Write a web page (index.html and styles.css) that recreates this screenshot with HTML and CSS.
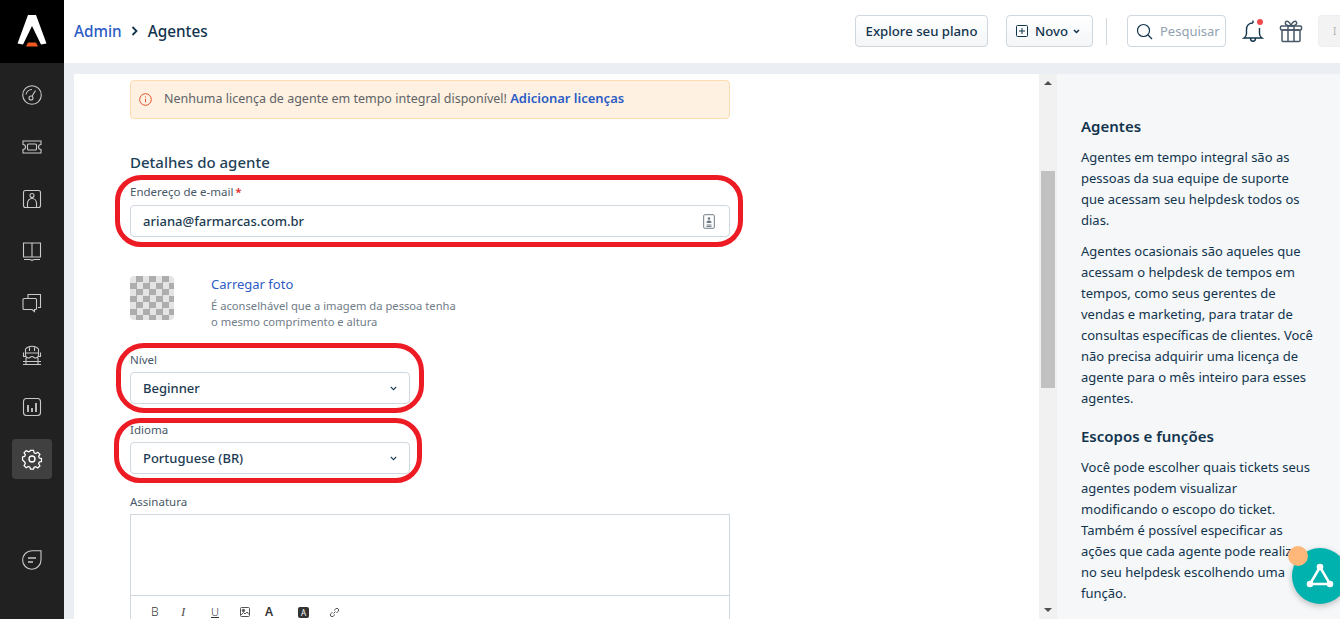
FILE: index.html
```html
<!DOCTYPE html>
<html lang="pt-BR">
<head>
  <meta charset="UTF-8">
  <title>Agentes</title>
  <link rel="stylesheet" href="styles.css">
</head>
<body>

  <aside class="sidebar">
    <div class="logo">
      <svg width="64" height="63" viewBox="0 0 64 63">
        <path fill="#fff" d="M28 15h8L46.500 43.500 41 44.500 32 26l-9 18.500-5.500-1z"/>
        <path fill="#f05a22" d="M28 42.500h8l2 4H26z"/>
      </svg>
    </div>
    <nav class="nav">
      <a class="nav-item">
        <svg class="nav-icon" viewBox="0 0 22 22"><circle cx="11" cy="11" r="9.300"/><circle cx="10" cy="14" r="2"/><path d="M11 12.300l3.500-5.800M5 10.500a6 6 0 0 1 6-5"/></svg>
      </a>
      <a class="nav-item">
        <svg class="nav-icon" viewBox="0 0 22 22"><path d="M2 5h18v3.500a2.500 2.500 0 0 0 0 5V17H2v-3.500a2.500 2.500 0 0 0 0-5z"/><rect x="6.500" y="8" width="9" height="6" rx="1"/></svg>
      </a>
      <a class="nav-item">
        <svg class="nav-icon" viewBox="0 0 22 22"><rect x="2.500" y="2.500" width="17" height="17" rx="2"/><circle cx="11" cy="7.500" r="2"/><path d="M6.500 19.500v-4c0-3 2-5 4.500-5s4.500 2 4.500 5v4"/></svg>
      </a>
      <a class="nav-item">
        <svg class="nav-icon" viewBox="0 0 22 22"><path d="M11 3v14M11 3H2.500v14H11M11 3h8.500v14H11M3 19.500h6l2 .8 2-.8h6"/></svg>
      </a>
      <a class="nav-item">
        <svg class="nav-icon" viewBox="0 0 22 22"><path d="M7 6V2.500h12.500v13H17"/><path d="M3 6.500h11.500a1 1 0 0 1 1 1v9a1 1 0 0 1-1 1h-1v2l-2.500-2H3a1 1 0 0 1-1-1v-9a1 1 0 0 1 1-1z"/></svg>
      </a>
      <a class="nav-item">
        <svg class="nav-icon" viewBox="0 0 22 22"><path d="M4.500 11V5c1.500-2 4-2.800 6.500-2.800S16 3 17.500 5v6M8.500 2.500V7M13.500 2.500V7M2.500 8.500v4h2M19.500 8.500v4h-2M4.500 9h13v2c0 2-1.500 3-3 3-1.500 0-2-1.500-3.500-1.500S9 14 7.500 14c-1.500 0-3-1-3-3M5 14v6M17 14v6M2 20.500h18M2 17.500h18"/></svg>
      </a>
      <a class="nav-item">
        <svg class="nav-icon" viewBox="0 0 22 22"><rect x="2.500" y="2.500" width="17" height="17" rx="3"/><path d="M7 9v7M11 12v4M15 7v9" stroke-width="1.800"/></svg>
      </a>
      <a class="nav-item active">
        <svg class="nav-icon" viewBox="0 0 22 22"><circle cx="11" cy="11" r="3"/><path d="M9.300 2h3.400l.6 2.600 1.800.8 2.300-1.400 2.400 2.400-1.400 2.300.7 1.800 2.400.6v3.300l-2.400.6-.7 1.800 1.400 2.300-2.400 2.400-2.300-1.400-1.800.7-.6 2.100H9.300l-.6-2.300-1.800-.7-2.300 1.400-2.400-2.400 1.400-2.300-.8-1.800L.5 12.700V9.300l2.300-.6.800-1.800-1.400-2.300L4.600 2.200 6.900 3.600l1.800-.8z" transform="translate(1.100 .6) scale(.9)"/></svg>
      </a>
      <a class="nav-item nav-bottom">
        <svg class="nav-icon" viewBox="0 0 22 22"><path d="M20 1.800V11a9.200 9.200 0 1 1-9.200-9.200z"/><path d="M7 9h8M7 13h5" stroke-width="1.400"/></svg>
      </a>
    </nav>
  </aside>

  <div class="page">
    <header class="topbar">
      <div class="breadcrumb">
        <a class="crumb-link">Admin</a>
        <svg class="crumb-sep" width="8" height="10" viewBox="0 0 8 10"><path d="M1.500 1l4 4-4 4"/></svg>
        <span class="crumb-current">Agentes</span>
      </div>
      <div class="top-actions">
        <button class="btn btn-plan">Explore seu plano</button>
        <button class="btn btn-new">
          <svg width="12" height="12" viewBox="0 0 12 12"><rect x=".5" y=".5" width="11" height="11" rx="1"/><path d="M6 3v6M3 6h6"/></svg>
          <span>Novo</span>
          <svg class="btn-caret" width="7" height="5" viewBox="0 0 7 5"><path d="M1 1l2.500 2.500L6 1"/></svg>
        </button>
        <span class="top-divider"></span>
        <div class="search">
          <svg width="17" height="17" viewBox="0 0 17 17"><circle cx="7.500" cy="7.500" r="6"/><path d="M12 12l4 4"/></svg>
          <span>Pesquisar</span>
        </div>
        <a class="bell">
          <svg width="22" height="24" viewBox="0 0 22 24"><path d="M11 4C7 4 4.500 6.500 4.500 10.500v4c0 2.500-1 3.500-2.500 4.500h18c-1.500-1-2.500-2-2.500-4.500V9M8.500 19.500c0 3.600 5 3.600 5 0M11 1.500V4"/></svg>
          <i class="bell-dot"></i>
        </a>
        <a class="gift">
          <svg width="24" height="24" viewBox="0 0 24 24"><rect x="3" y="11" width="18" height="11.500" rx="1"/><rect x="1.500" y="7" width="21" height="4" rx="1"/><path d="M9 7v15.500M15 7v15.500M12 7C8 7 5.500 5.500 6.500 3.200S11 2.500 12 7zM12 7c4 0 6.500-1.500 5.500-3.800S13 2.500 12 7z"/></svg>
        </a>
        <div class="avatar">I</div>
      </div>
    </header>

    <div class="workspace">
      <main class="main">
        <div class="form">
          <div class="notice">
            <svg width="13" height="13" viewBox="0 0 13 13"><circle cx="6.500" cy="6.500" r="5.800"/><path d="M6.500 5.800v3.500M6.500 3.400v1.100"/></svg>
            <p>Nenhuma licença de agente em tempo integral disponível! <a>Adicionar licenças</a></p>
          </div>

          <h2 class="section-title">Detalhes do agente</h2>

          <div class="field field-wide field-email">
            <span class="mark mark-email"></span>
            <label class="label">Endereço de e-mail<em>*</em></label>
            <div class="input">
              <span>ariana@farmarcas.com.br</span>
              <svg width="12" height="15" viewBox="0 0 12 15"><rect x=".7" y=".7" width="10.600" height="13.600" rx="1"/><circle class="fill" cx="6" cy="4.500" r="1.300"/><path class="fill" d="M3.500 9c0-2 1-2.500 2.500-2.500S8.500 7 8.500 9z"/><path d="M3.500 11h5M3.500 12.500h5"/></svg>
            </div>
          </div>

          <div class="photo">
            <div class="checker"></div>
            <div class="photo-text">
              <a>Carregar foto</a>
              <p>É aconselhável que a imagem da pessoa tenha<br>o mesmo comprimento e altura</p>
            </div>
          </div>

          <div class="field field-short field-level">
            <span class="mark mark-level"></span>
            <label class="label">Nível</label>
            <div class="input">
              <span>Beginner</span>
              <svg class="select-caret" width="7" height="5" viewBox="0 0 9 6"><path d="M1 1l3.500 3.500L8 1"/></svg>
            </div>
          </div>

          <div class="field field-short field-lang">
            <span class="mark mark-lang"></span>
            <label class="label">Idioma</label>
            <div class="input">
              <span>Portuguese (BR)</span>
              <svg class="select-caret" width="7" height="5" viewBox="0 0 9 6"><path d="M1 1l3.500 3.500L8 1"/></svg>
            </div>
          </div>

          <div class="field field-wide field-sign">
            <label class="label">Assinatura</label>
            <div class="editor">
              <div class="editor-area"></div>
              <div class="toolbar">
                <span class="tool tool-b">B</span>
                <span class="tool tool-i">I</span>
                <span class="tool tool-u">U</span>
                <svg class="tool-img" width="10" height="10" viewBox="0 0 10 10"><rect x=".5" y=".5" width="9" height="9" rx="1"/><circle class="fill" cx="3.500" cy="3.500" r="1.200"/><path d="M1 8l2.500-2.500L5 7l2-2 2 2.500"/></svg>
                <span class="tool tool-a">A</span>
                <span class="tool tool-fill">A</span>
                <svg class="tool-link" width="11" height="11" viewBox="0 0 11 11"><path d="M4.500 6.500l2-2M3.500 5L1.800 6.800a1.700 1.700 0 0 0 2.400 2.400L6 7.500M5 3.500l1.800-1.700a1.700 1.700 0 0 1 2.400 2.400L7.500 6"/></svg>
              </div>
            </div>
          </div>
        </div>
      </main>

      <div class="scrollbar">
        <i class="arrow-up"></i>
        <div class="thumb"></div>
        <i class="arrow-down"></i>
      </div>

      <section class="help">
        <h3>Agentes</h3>
        <p>Agentes em tempo integral são as pessoas da sua equipe de suporte que acessam seu helpdesk todos os dias.</p>
        <p>Agentes ocasionais são aqueles que acessam o helpdesk de tempos em tempos, como seus gerentes de vendas e marketing, para tratar de consultas específicas de clientes. Você não precisa adquirir uma licença de agente para o mês inteiro para esses agentes.</p>
        <h3 class="help-second">Escopos e funções</h3>
        <p>Você pode escolher quais tickets seus agentes podem visualizar modificando o escopo do ticket. Também é possível especificar as ações que cada agente pode realizar no seu helpdesk escolhendo uma função.</p>
      </section>
    </div>
  </div>

  <div class="chat">
    <svg width="30" height="28" viewBox="0 0 30 28"><path d="M15 5L5 22h20z"/><circle cx="15" cy="5" r="3.300"/><circle cx="5" cy="22" r="3.300"/><circle cx="25" cy="22" r="3.300"/></svg>
  </div>
  <span class="chat-dot"></span>

</body>
</html>
```

FILE: styles.css
```css
* {
  box-sizing: border-box;
}

html, body {
  height: 100%;
}

body {
  margin: 0;
  display: flex;
  overflow: hidden;
  font-family: "Noto Sans", sans-serif;
  color: #12344d;
  background-color: #ebeff3;
}

p {
  margin: 0;
}

a {
  color: #2c5cc5;
}

/* sidebar */
.sidebar {
  width: 64px;
  flex: none;
  background-color: #212121;
}

.logo {
  height: 63px;
  background-color: #000;
}

.logo svg {
  display: block;
}

.nav {
  display: flex;
  flex-direction: column;
  align-items: center;
  padding-top: 12px;
}

.nav-item {
  width: 40px;
  height: 40px;
  margin-bottom: 12px;
  display: flex;
  align-items: center;
  justify-content: center;
  border-radius: 4px;
}

.nav-item.active {
  background-color: #404040;
}

.nav-bottom {
  margin-top: 49px;
}

.nav-icon {
  width: 22px;
  height: 22px;
  fill: none;
  stroke: #c9c9c9;
  stroke-width: 1.100;
}

.active .nav-icon {
  stroke: #fff;
  stroke-width: 1.400;
}

/* header */
.page {
  flex: 1;
  min-width: 0;
  display: flex;
  flex-direction: column;
}

.topbar {
  height: 63px;
  flex: none;
  display: flex;
  align-items: center;
  justify-content: space-between;
  padding: 0 0 1px 10px;
  background-color: #fff;
  overflow: hidden;
}

.breadcrumb {
  display: flex;
  align-items: center;
  font-size: 15.300px;
  font-weight: 500;
}

.crumb-sep {
  margin: 0 9px;
  fill: none;
  stroke: #12344d;
  stroke-width: 1.800;
}

.top-actions {
  display: flex;
  align-items: center;
}

.btn {
  height: 32px;
  display: flex;
  align-items: center;
  border: 1px solid #cfd7df;
  border-radius: 4px;
  background-image: linear-gradient(#fff, #f3f5f7);
  font-family: inherit;
  font-size: 13.200px;
  font-weight: 500;
  color: #12344d;
}

.btn-plan {
  width: 133px;
  justify-content: center;
  padding: 0;
}

.btn-new {
  width: 87px;
  margin-left: 18px;
  padding: 0 0 0 9px;
}

.btn-new svg {
  fill: none;
  stroke: #12344d;
}

.btn-new .btn-caret {
  stroke-width: 1.500;
}

.btn-new span {
  margin: 0 5px 0 7px;
}

.top-divider {
  width: 1px;
  height: 27px;
  margin: 0 20px 0 13px;
  background-color: #cfd7df;
}

.search {
  width: 99px;
  height: 32px;
  display: flex;
  align-items: center;
  gap: 7px;
  padding-left: 8px;
  border: 1px solid #cfd7df;
  border-radius: 4px;
  font-size: 13px;
  color: #92a2b1;
}

.search svg {
  flex: none;
  fill: none;
  stroke: #12344d;
  stroke-width: 1.200;
}

.bell {
  position: relative;
  display: flex;
  margin-left: 16px;
}

.bell svg {
  fill: none;
  stroke: #12344d;
  stroke-width: 1.400;
}

.bell-dot {
  position: absolute;
  top: 0;
  right: 1px;
  width: 6px;
  height: 6px;
  border-radius: 50%;
  background-color: #f04a4a;
}

.gift {
  display: flex;
  margin-left: 15px;
}

.gift svg {
  fill: none;
  stroke: #475867;
  stroke-width: 1.500;
}

.avatar {
  width: 32px;
  height: 32px;
  margin-left: 15px;
  margin-right: -10px;
  padding-left: 14px;
  flex: none;
  border: 1px solid #ebeff3;
  border-radius: 4px;
  background-color: #f3f3f3;
  font-size: 10px;
  line-height: 30px;
  color: #b5b5b5;
}

/* content area */
.workspace {
  flex: 1;
  min-height: 0;
  display: flex;
  margin-top: 11px;
  padding-left: 10px;
}

.main {
  width: 965px;
  flex: none;
  overflow: hidden;
  background-color: #fff;
}

.form {
  width: 656px;
  padding: 6px 0 0 56px;
}

.notice {
  height: 39px;
  display: flex;
  align-items: center;
  gap: 12px;
  padding: 0 0 3px 8px;
  border: 1px solid #fedcb3;
  border-radius: 4px;
  background-color: #fef1e1;
  font-size: 12.500px;
  color: #5f6367;
}

.notice svg {
  flex: none;
  margin-top: 3px;
  fill: none;
  stroke: #e4502b;
  stroke-width: 1;
}

.notice a {
  font-size: 13px;
  font-weight: 600;
}

.section-title {
  margin: 33px 0 0;
  font-size: 15px;
  font-weight: 500;
  line-height: 20px;
  color: #1f3f57;
}

.field {
  position: relative;
}

.field-wide {
  margin-top: 11px;
}

.field-short {
  width: 280px;
}

.field-level {
  margin-top: 21px;
}

.field-lang {
  margin-top: 17px;
}

.field-sign {
  margin-top: 19px;
}

.label {
  display: block;
  height: 21px;
  font-size: 11.500px;
  line-height: 18px;
  color: #475867;
}

.field-email .label {
  height: 22px;
}

.label em {
  margin-left: 2px;
  font-size: 11px;
  font-style: normal;
  font-weight: 700;
  color: #e43538;
}

.input {
  height: 32px;
  display: flex;
  align-items: center;
  justify-content: space-between;
  padding: 0 14px 0 12px;
  border: 1px solid #cfd7df;
  border-radius: 4px;
  background-color: #fff;
  font-size: 13px;
  font-weight: 500;
  color: #1c3b52;
}

.input svg {
  fill: none;
  stroke: #6f7c87;
}

.input .fill {
  fill: #6f7c87;
  stroke: none;
}

.input .select-caret {
  margin-right: -2px;
  stroke-width: 1.400;
  stroke: #12344d;
}

/* red hand drawn marks over the fields */
.mark {
  position: absolute;
  border: 5px solid #ed1c24;
  pointer-events: none;
}

.mark-email {
  left: -15px;
  right: -13px;
  top: -8px;
  height: 72px;
  border-radius: 26px;
}

.mark-level {
  left: -14px;
  right: -14px;
  top: -8px;
  height: 70px;
  border-radius: 28px;
}

.mark-lang {
  left: -16px;
  right: -12px;
  top: -3px;
  height: 65px;
  border-radius: 26px;
}

/* photo */
.photo {
  display: flex;
  gap: 37px;
  margin-top: 39px;
}

.checker {
  width: 44px;
  height: 44px;
  flex: none;
  border-radius: 4px;
  background-color: #e4e4e4;
  background-image: conic-gradient(#adadad 25%, transparent 25% 50%, #adadad 50% 75%, transparent 75%);
  background-size: 13px 13px;
}

.photo-text a {
  display: block;
  font-size: 13px;
  line-height: 16px;
}

.photo-text p {
  margin-top: 6px;
  font-size: 11.200px;
  line-height: 16px;
  color: #6f7c87;
}

/* signature editor */
.editor {
  height: 120px;
  border: 1px solid #cfd7df;
  border-bottom: none;
}

.editor-area {
  height: 81px;
  border-bottom: 1px solid #cfd7df;
}

.toolbar {
  display: flex;
  align-items: center;
  height: 32px;
  padding-left: 20px;
  color: #333;
}

.tool {
  line-height: 12px;
}

.tool-b {
  width: 30px;
  font-size: 12px;
  font-weight: 300;
}

.tool-i {
  width: 30px;
  font-family: "Liberation Serif", serif;
  font-size: 13px;
  font-style: italic;
  color: #555;
}

.tool-u {
  width: 29px;
  font-size: 11px;
  font-weight: 300;
  text-decoration: underline;
}

.tool-img {
  margin-right: 15px;
  fill: none;
  stroke: #555;
}

.tool-img .fill {
  fill: #555;
}

.tool-a {
  width: 33px;
  font-weight: 600;
  font-size: 12px;
}

.tool-fill {
  width: 11px;
  height: 11px;
  margin-right: 20px;
  border-radius: 2px;
  background-color: #333;
  color: #fff;
  font-size: 8px;
  line-height: 11px;
  text-align: center;
}

.tool-link {
  fill: none;
  stroke: #555;
}

/* fake scrollbar of the form */
.scrollbar {
  width: 18px;
  flex: none;
  display: flex;
  flex-direction: column;
  align-items: center;
  padding: 7px 0;
  background-color: #f1f1f1;
}

.arrow-up {
  width: 0;
  height: 0;
  border: 4px solid transparent;
  border-top: none;
  border-bottom: 4px solid #505050;
}

.arrow-down {
  width: 0;
  height: 0;
  margin-top: auto;
  border: 4px solid transparent;
  border-bottom: none;
  border-top: 4px solid #505050;
}

.thumb {
  width: 14px;
  height: 217px;
  margin-top: 86px;
  background-color: #c1c1c1;
}

/* right help panel */
.help {
  flex: 1;
  min-width: 0;
  padding: 41px 25px 0 24px;
  overflow: hidden;
  background-color: #f5f7f9;
  font-size: 13px;
  line-height: 21px;
}

.help h3 {
  margin: 0 0 10px;
  font-size: 15px;
  font-weight: 600;
  line-height: 22px;
}

.help p {
  margin-bottom: 10px;
}

.help .help-second {
  margin-top: 16px;
}

/* chat widget */
.chat {
  position: absolute;
  left: 1292px;
  top: 548px;
  width: 56px;
  height: 56px;
  padding: 14px 0 0 13px;
  border-radius: 50%;
  background-color: #00b2ae;
  box-shadow: 0 2px 6px rgba(0, 0, 0, 0.25);
}

.chat svg {
  display: block;
  fill: none;
  stroke: #fff;
  stroke-width: 2.500;
}

.chat circle {
  fill: #fff;
  stroke: none;
}

.chat-dot {
  position: absolute;
  left: 1288px;
  top: 546px;
  width: 20px;
  height: 20px;
  border-radius: 50%;
  background-color: #ffb87a;
}
```
